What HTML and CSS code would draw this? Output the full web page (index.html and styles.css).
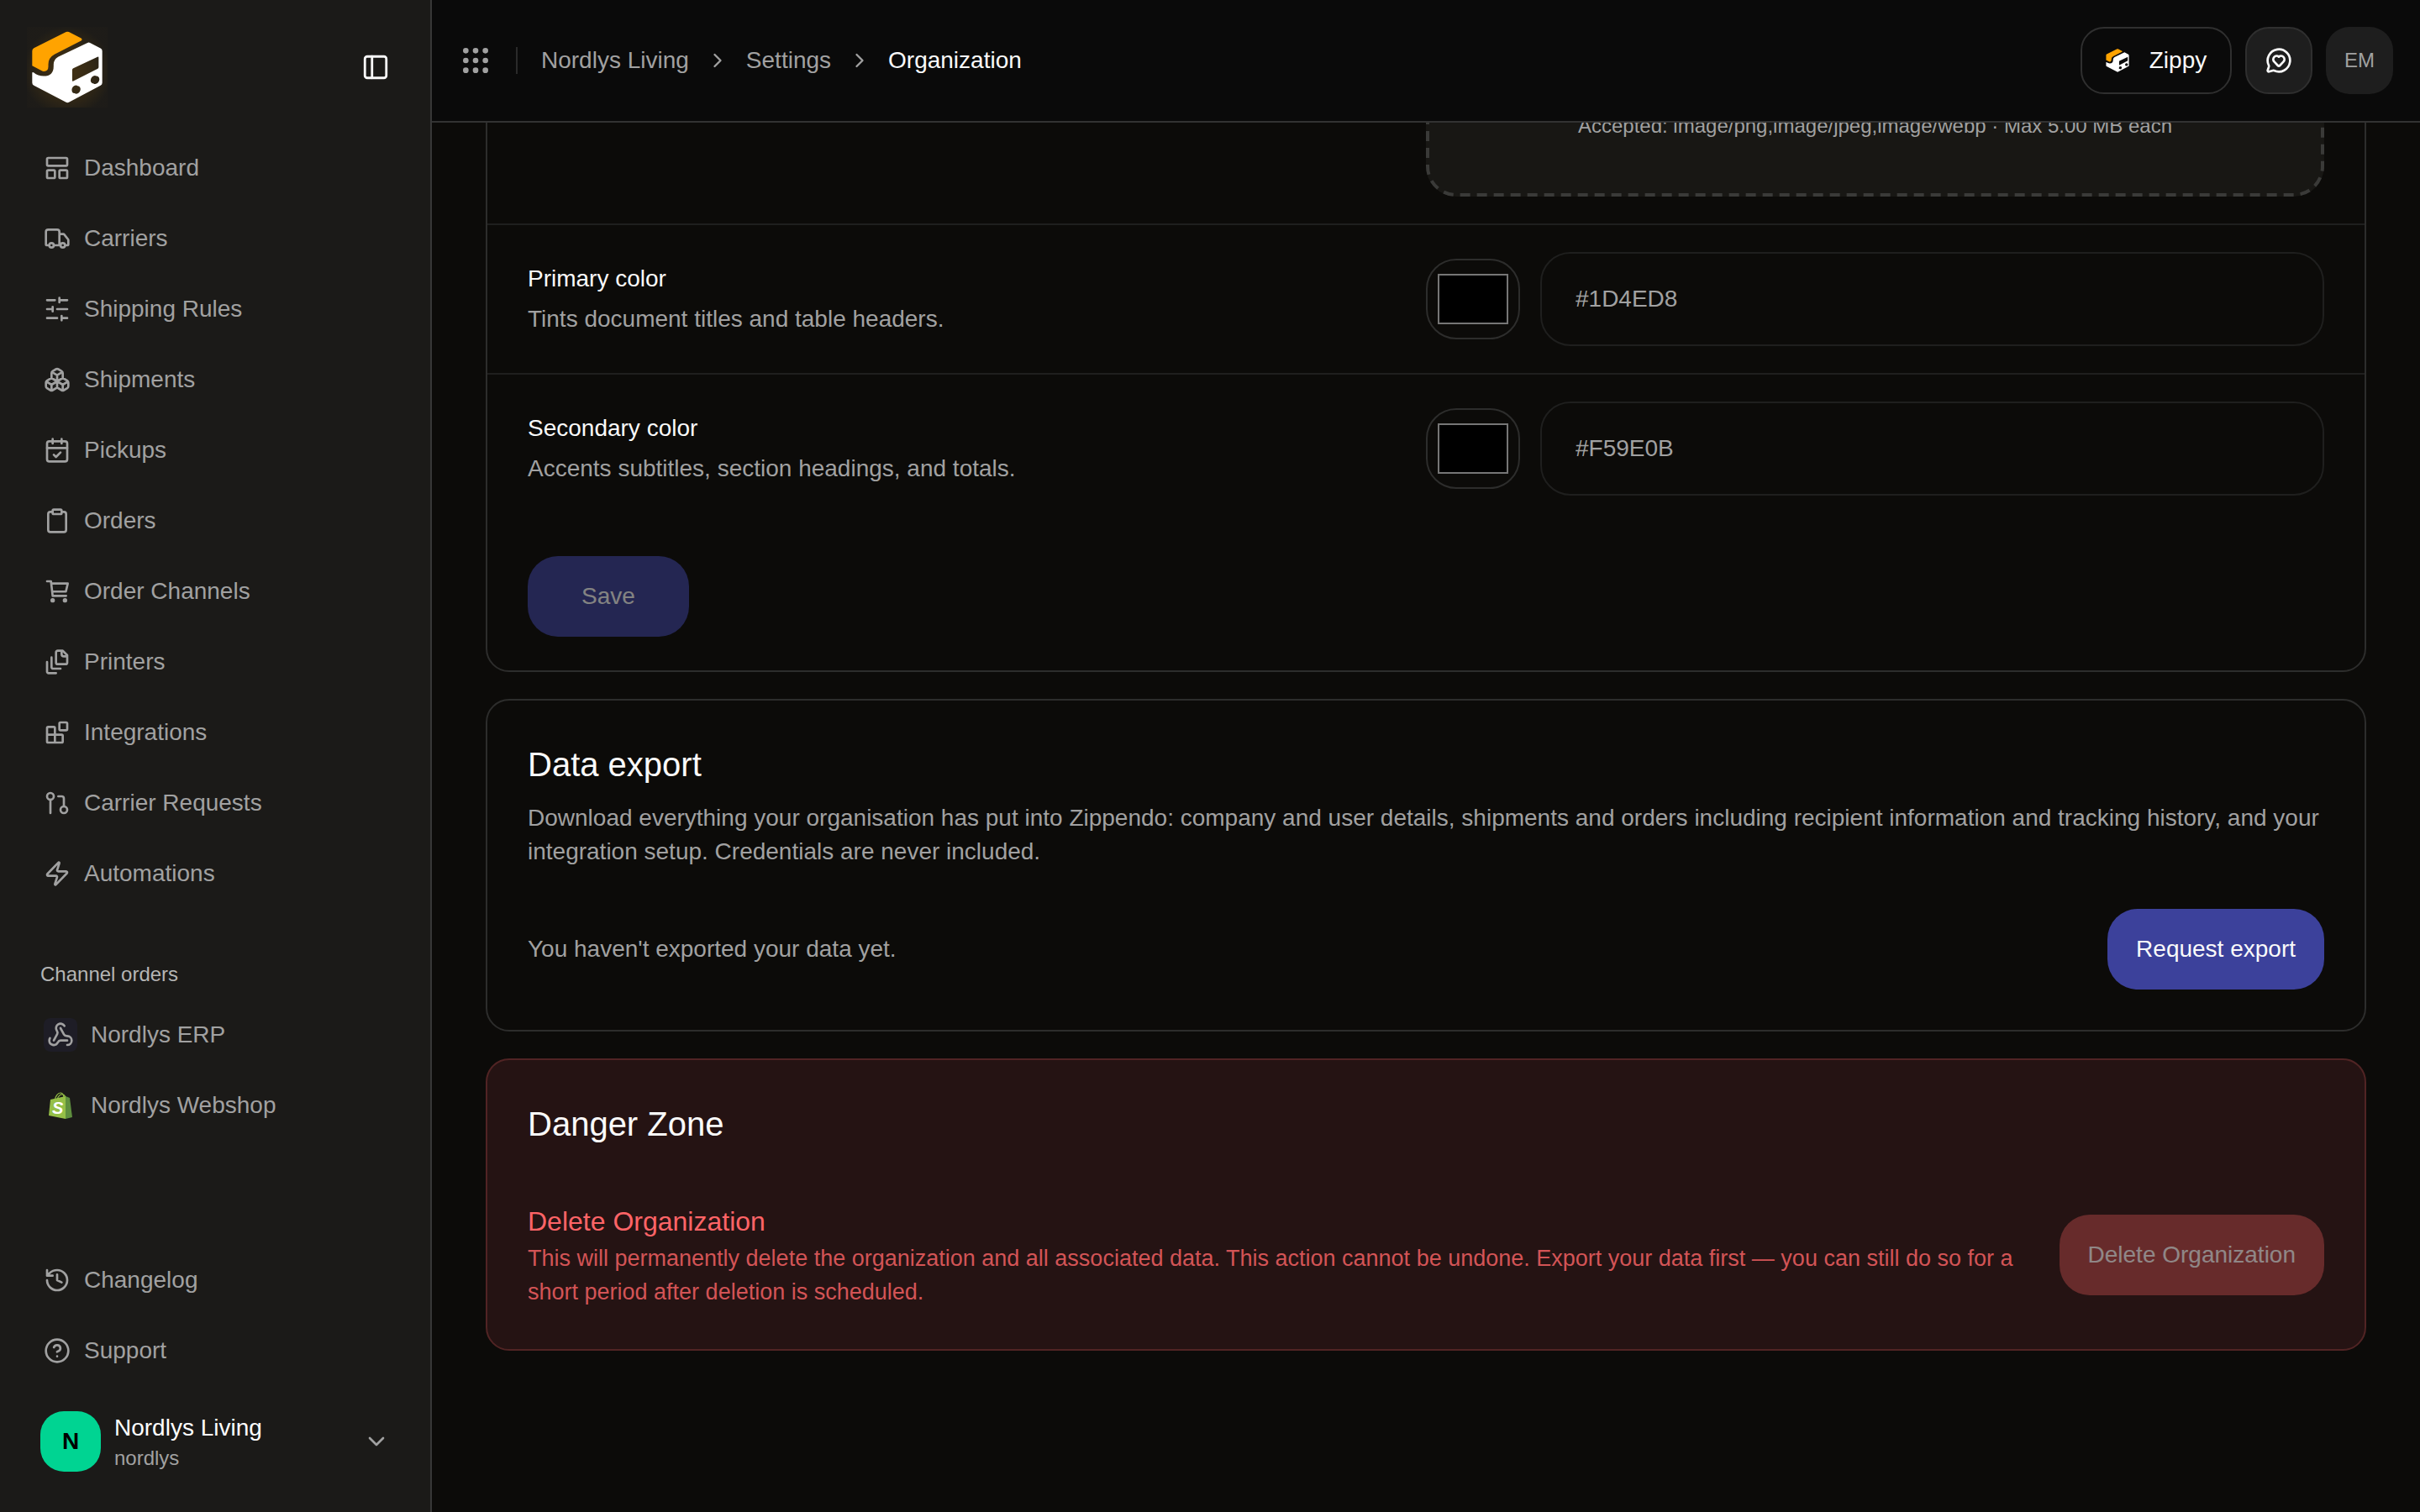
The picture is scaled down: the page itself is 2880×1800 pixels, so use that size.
FILE: index.html
```html
<!DOCTYPE html>
<html lang="en">
<head>
    <meta charset="UTF-8">
    <meta name="viewport" content="width=device-width, initial-scale=1.0">
    <title>Organization</title>
    <link rel="stylesheet" href="styles.css">
</head>
<body>
    <svg class="sprite" aria-hidden="true">
        <symbol id="logo" viewBox="16 14 256 260">
            <path fill="#ffa300" d="M140 17q5-2 10 0l44 23q6 4 0 9L98 98q-22 12-22 36v8q0 17-16 17-4 0-9-3l-33-17V86q0-8 6-11z"/>
            <path fill="#fff" fill-rule="evenodd" d="M217 56q4-3 9 0l38 20q6 3 6 10v114q0 7-6 10l-114 60q-5 3-10 0L24 210q-6-3-6-10v-35q0-5 5-2 16 13 36 13 36 0 36-36v-6q0-18 16-27zM166 148q-4 2-4 6v37q0 5 4 3l88-45q3-2 3-5v-35q0-4-4-2zM181 211a12 15 30 1 0-10 27a12 15 30 1 0 10-27zM249 176a12 15 30 1 0-10 27a12 15 30 1 0 10-27z"/>
        </symbol>
    </svg>

    <div class="app">
        <aside class="sidebar">
            <div class="sidebar-header">
                <a class="brand" href="#" aria-label="Home"><svg><use href="#logo"/></svg></a>
                <button class="toggle" type="button" aria-label="Toggle sidebar">
                    <svg class="icon" viewBox="0 0 24 24"><rect x="3" y="3" width="18" height="18" rx="2"/><path d="M9 3v18"/></svg>
                </button>
            </div>

            <nav class="nav">
                <a class="nav-item" href="#">
                    <svg class="icon" viewBox="0 0 24 24"><rect x="3" y="3" width="18" height="7" rx="1"/><rect x="3" y="14" width="7" height="7" rx="1"/><rect x="14" y="14" width="7" height="7" rx="1"/></svg>
                    Dashboard
                </a>
                <a class="nav-item" href="#">
                    <svg class="icon" viewBox="0 0 24 24"><path d="M14 18V6a2 2 0 0 0-2-2H4a2 2 0 0 0-2 2v11a1 1 0 0 0 1 1h2M15 18H9M19 18h2a1 1 0 0 0 1-1v-3.65a1 1 0 0 0-.22-.624l-3.48-4.35A1 1 0 0 0 17.52 8H14"/><circle cx="17" cy="18" r="2"/><circle cx="7" cy="18" r="2"/></svg>
                    Carriers
                </a>
                <a class="nav-item" href="#">
                    <svg class="icon" viewBox="0 0 24 24"><path d="M21 4h-7M10 4H3M21 12h-9M8 12H3M21 20h-5M12 20H3M14 2v4M8 10v4M16 18v4"/></svg>
                    Shipping Rules
                </a>
                <a class="nav-item" href="#">
                    <svg class="icon" viewBox="0 0 24 24"><path d="M2.97 12.92A2 2 0 0 0 2 14.63v3.24a2 2 0 0 0 .97 1.71l3 1.8a2 2 0 0 0 2.06 0L12 19v-5.5l-5-3-4.03 2.42ZM7 16.5l-4.74-2.85M7 16.5l5-3M7 16.5v5.17M12 13.5V19l3.97 2.38a2 2 0 0 0 2.06 0l3-1.8a2 2 0 0 0 .97-1.71v-3.24a2 2 0 0 0-.97-1.71L17 10.5l-5 3ZM17 16.5l-5-3M17 16.5l4.74-2.85M17 16.5v5.17M7.97 4.42A2 2 0 0 0 7 6.13v4.37l5 3 5-3V6.13a2 2 0 0 0-.97-1.71l-3-1.8a2 2 0 0 0-2.06 0l-3 1.8ZM12 8 7.26 5.15M12 8l4.74-2.85M12 13.5V8"/></svg>
                    Shipments
                </a>
                <a class="nav-item" href="#">
                    <svg class="icon" viewBox="0 0 24 24"><path d="M8 2v4M16 2v4M3 10h18M9 16l2 2 4-4"/><rect x="3" y="4" width="18" height="18" rx="2"/></svg>
                    Pickups
                </a>
                <a class="nav-item" href="#">
                    <svg class="icon" viewBox="0 0 24 24"><rect x="8" y="2" width="8" height="4" rx="1"/><path d="M16 4h2a2 2 0 0 1 2 2v14a2 2 0 0 1-2 2H6a2 2 0 0 1-2-2V6a2 2 0 0 1 2-2h2"/></svg>
                    Orders
                </a>
                <a class="nav-item" href="#">
                    <svg class="icon" viewBox="0 0 24 24"><path d="M3 3h3.5L8 16h12M7 5h14.5l-1.7 7.2H7.6"/><circle cx="8" cy="20" r="1"/><circle cx="19" cy="20" r="1"/></svg>
                    Order Channels
                </a>
                <a class="nav-item" href="#">
                    <svg class="icon" viewBox="0 0 24 24"><path d="M21 7h-3a2 2 0 0 1-2-2V2M21 6v6.5c0 .8-.7 1.5-1.5 1.5h-7c-.8 0-1.5-.7-1.5-1.5v-9c0-.8.7-1.5 1.5-1.5H17ZM7 8v8.8c0 .3.2.6.4.8.2.2.5.4.8.4H15M3 12v8.8c0 .3.2.6.4.8.2.2.5.4.8.4H11"/></svg>
                    Printers
                </a>
                <a class="nav-item" href="#">
                    <svg class="icon" viewBox="0 0 24 24"><rect x="14" y="3" width="7" height="7" rx="1"/><path d="M10 21V8a1 1 0 0 0-1-1H4a1 1 0 0 0-1 1v12a1 1 0 0 0 1 1h12a1 1 0 0 0 1-1v-5a1 1 0 0 0-1-1H3"/></svg>
                    Integrations
                </a>
                <a class="nav-item" href="#">
                    <svg class="icon" viewBox="0 0 24 24"><circle cx="18" cy="18" r="3"/><circle cx="6" cy="6" r="3"/><path d="M13 6h3a2 2 0 0 1 2 2v7M6 9v12"/></svg>
                    Carrier Requests
                </a>
                <a class="nav-item" href="#">
                    <svg class="icon" viewBox="0 0 24 24"><path d="M4 14a1 1 0 0 1-.78-1.63l9.9-10.2a.5.5 0 0 1 .86.46l-1.92 6.02A1 1 0 0 0 13 10h7a1 1 0 0 1 .78 1.63l-9.9 10.2a.5.5 0 0 1-.86-.46l1.92-6.02A1 1 0 0 0 11 14z"/></svg>
                    Automations
                </a>
            </nav>

            <h2 class="nav-label">Channel orders</h2>
            <nav class="nav">
                <a class="nav-item" href="#">
                    <span class="channel channel-erp">
                        <svg class="icon" viewBox="0 0 24 24"><path d="M18 16.98h-5.99c-1.1 0-1.95.94-2.48 1.9A4 4 0 0 1 2 17c.01-.7.2-1.4.57-2M6 17l3.13-5.78c.53-.97.1-2.18-.5-3.1a4 4 0 1 1 6.89-4.06M12 6l3.13 5.73C15.66 12.7 16.9 13 18 13a4 4 0 0 1 0 8"/></svg>
                    </span>
                    Nordlys ERP
                </a>
                <a class="nav-item" href="#">
                    <span class="channel">
                        <!-- shopping bag -->
                        <svg class="bag" viewBox="0 0 28 32">
                            <path d="M7 10c1-5 4-9 7-9s4 4 4 7M10 9c1-4 4-7 7-6s3 3 3 5" fill="none" stroke="#95bf47" stroke-width="1.2"/>
                            <path d="M2 9l18-4v27L0 28z" fill="#95bf47"/>
                            <path d="M20 5l5 2 3 23-8 2z" fill="#5e8e3e"/>
                            <text class="bag-letter" x="4" y="26">S</text>
                        </svg>
                    </span>
                    Nordlys Webshop
                </a>
            </nav>

            <nav class="nav nav-bottom">
                <a class="nav-item" href="#">
                    <svg class="icon" viewBox="0 0 24 24"><path d="M3 12a9 9 0 1 0 9-9 9.75 9.75 0 0 0-6.74 2.74L3 8M3 3v5h5M12 7v5l4 2"/></svg>
                    Changelog
                </a>
                <a class="nav-item" href="#">
                    <svg class="icon" viewBox="0 0 24 24"><circle cx="12" cy="12" r="10"/><path d="M9.09 9a3 3 0 0 1 5.83 1c0 2-3 3-3 3M12 17h.01"/></svg>
                    Support
                </a>
            </nav>

            <button class="org" type="button">
                <span class="org-avatar">N</span>
                <span class="org-text">
                    <span class="org-name">Nordlys Living</span>
                    <span class="org-slug">nordlys</span>
                </span>
                <svg class="icon" viewBox="0 0 24 24"><path d="M6 9l6 6 6-6"/></svg>
            </button>
        </aside>

        <div class="page">
            <header class="topbar">
                <button class="apps" type="button" aria-label="Apps">
                    <svg class="icon" viewBox="0 0 24 24"><circle cx="5" cy="5" r="1"/><circle cx="12" cy="5" r="1"/><circle cx="19" cy="5" r="1"/><circle cx="5" cy="12" r="1"/><circle cx="12" cy="12" r="1"/><circle cx="19" cy="12" r="1"/><circle cx="5" cy="19" r="1"/><circle cx="12" cy="19" r="1"/><circle cx="19" cy="19" r="1"/></svg>
                </button>
                <nav class="breadcrumb">
                    <a href="#">Nordlys Living</a>
                    <svg class="icon" viewBox="0 0 24 24"><path d="M9 18l6-6-6-6"/></svg>
                    <a href="#">Settings</a>
                    <svg class="icon" viewBox="0 0 24 24"><path d="M9 18l6-6-6-6"/></svg>
                    <span class="current">Organization</span>
                </nav>
                <div class="actions">
                    <button class="action zippy" type="button"><svg><use href="#logo"/></svg>Zippy</button>
                    <button class="action feedback" type="button" aria-label="Feedback">
                        <svg class="icon" viewBox="0 0 24 24"><path d="M2.992 16.342a2 2 0 0 1 .094 1.167l-1.065 3.29a1 1 0 0 0 1.236 1.168l3.413-.998a2 2 0 0 1 1.099.092 10 10 0 1 0-4.777-4.719"/><path d="M7.828 13.07A3 3 0 0 1 12 8.764a3 3 0 0 1 4.172 4.306l-3.447 3.62a1 1 0 0 1-1.449 0z"/></svg>
                    </button>
                    <button class="action user" type="button">EM</button>
                </div>
            </header>

            <main class="content">
                <form class="card branding">
                    <div class="row">
                        <div class="dropzone">
                            <svg class="dropzone-border" aria-hidden="true"><rect x="2" y="2" rx="34"/></svg>
                            <p>Accepted: image/png,image/jpeg,image/webp · Max 5.00 MB each</p>
                        </div>
                    </div>
                    <div class="row">
                        <div class="row-text">
                            <label for="primary">Primary color</label>
                            <p>Tints document titles and table headers.</p>
                        </div>
                        <div class="color-field">
                            <input class="swatch" type="color" value="#000000" aria-label="Pick primary color">
                            <input class="text-input" id="primary" type="text" placeholder="#1D4ED8">
                        </div>
                    </div>
                    <div class="row">
                        <div class="row-text">
                            <label for="secondary">Secondary color</label>
                            <p>Accents subtitles, section headings, and totals.</p>
                        </div>
                        <div class="color-field">
                            <input class="swatch" type="color" value="#000000" aria-label="Pick secondary color">
                            <input class="text-input" id="secondary" type="text" placeholder="#F59E0B">
                        </div>
                    </div>
                    <div class="card-footer">
                        <button class="btn btn-wide" type="submit" disabled>Save</button>
                    </div>
                </form>

                <section class="card padded">
                    <h2>Data export</h2>
                    <p>Download everything your organisation has put into Zippendo: company and user details, shipments and orders including recipient information and tracking history, and your integration setup. Credentials are never included.</p>
                    <div class="card-action">
                        <p>You haven't exported your data yet.</p>
                        <button class="btn" type="button">Request export</button>
                    </div>
                </section>

                <section class="card padded danger">
                    <h2>Danger Zone</h2>
                    <div class="card-action">
                        <div>
                            <h3>Delete Organization</h3>
                            <p>This will permanently delete the organization and all associated data. This action cannot be undone. Export your data first — you can still do so for a short period after deletion is scheduled.</p>
                        </div>
                        <button class="btn btn-danger" type="button" disabled>Delete Organization</button>
                    </div>
                </section>
            </main>
        </div>
    </div>
</body>
</html>
```

FILE: styles.css
```css
* {
    box-sizing: border-box;
    margin: 0;
    padding: 0;
}

body {
    background-color: #0c0b09;
    color: #fafafa;
    font-family: "Liberation Sans", Arial, sans-serif;
    font-size: 28px;
    line-height: 40px;
}

a {
    color: inherit;
    text-decoration: none;
}

button,
input {
    font: inherit;
    color: inherit;
    background: none;
    border: none;
}

h2,
h3 {
    font-weight: 400;
}

.sprite {
    display: none;
}

.icon {
    flex: none;
    width: 32px;
    height: 32px;
    fill: none;
    stroke: currentColor;
    stroke-width: 2;
    stroke-linecap: round;
    stroke-linejoin: round;
}

.app {
    display: flex;
    height: 100vh;
}

/* Sidebar */
.sidebar {
    flex: none;
    display: flex;
    flex-direction: column;
    width: 514px;
    padding: 32px 0 48px;
    background-color: #1b1a18;
    border-right: 2px solid #373737;
    color: #a1a1a1;
}

.sidebar-header {
    display: flex;
    align-items: center;
    justify-content: space-between;
    padding: 0 48px 0 32px;
    margin-bottom: 30px;
}

.brand {
    display: flex;
    width: 96px;
    height: 96px;
    padding: 5px;
    background: radial-gradient(circle at 50% 55%, rgba(255, 163, 0, 0.18), rgba(255, 163, 0, 0.1) 45%, rgba(255, 163, 0, 0.01) 75%);
}

.brand svg {
    width: 100%;
    height: 100%;
}

.toggle {
    display: flex;
    color: #fafafa;
}

.toggle .icon {
    width: 34px;
    height: 34px;
}

.nav {
    display: flex;
    flex-direction: column;
    padding: 0 32px;
}

.nav-item {
    display: flex;
    align-items: center;
    gap: 16px;
    height: 84px;
    padding: 0 20px;
}

.nav-label {
    margin: 54px 0 6px;
    padding: 0 48px;
    font-size: 24px;
    line-height: 48px;
    color: #b5b5b4;
}

.nav-bottom {
    margin-top: auto;
}

.channel {
    display: flex;
    align-items: center;
    justify-content: center;
    width: 40px;
    height: 40px;
    border-radius: 8px;
}

.channel-erp {
    background-color: #1e1d26;
}

.bag {
    width: 28px;
    height: 32px;
}

.bag-letter {
    fill: #fff;
    font-size: 20px;
    font-weight: 700;
    font-style: italic;
}

.org {
    display: flex;
    align-items: center;
    gap: 16px;
    margin-top: 30px;
    padding: 0 48px;
    text-align: left;
}

.org-avatar {
    display: flex;
    align-items: center;
    justify-content: center;
    width: 72px;
    height: 72px;
    border-radius: 28px;
    background-color: #00d492;
    color: #000;
    font-weight: 700;
}

.org-text {
    flex: 1;
    display: flex;
    flex-direction: column;
}

.org-name {
    color: #fff;
}

.org-slug {
    font-size: 24px;
    line-height: 32px;
}

/* Top bar */
.page {
    flex: 1;
    min-width: 0;
    display: flex;
    flex-direction: column;
}

.topbar {
    flex: none;
    display: flex;
    align-items: center;
    height: 146px;
    padding: 0 32px;
    background-color: #0a0a0a;
    border-bottom: 2px solid #323232;
}

.apps {
    display: flex;
    color: #a1a1a1;
}

.apps .icon {
    width: 40px;
    height: 40px;
}

.breadcrumb {
    display: flex;
    align-items: center;
    gap: 20px;
    height: 32px;
    margin-left: 28px;
    padding-left: 28px;
    border-left: 2px solid #2a2a2a;
    color: #a1a1a1;
}

.breadcrumb .icon {
    width: 28px;
    height: 28px;
}

.current {
    color: #fafafa;
}

.actions {
    display: flex;
    gap: 16px;
    margin-left: auto;
}

.action {
    display: flex;
    align-items: center;
    justify-content: center;
    width: 80px;
    height: 80px;
    border: 2px solid #2f2f2f;
    border-radius: 28px;
}

.zippy {
    gap: 24px;
    width: 180px;
}

.zippy svg {
    width: 28px;
    height: 28px;
}

.feedback {
    background-color: #1e1e1e;
}

.user {
    border: none;
    background-color: #1e1e1e;
    color: #a1a1a1;
    font-size: 24px;
}

/* Settings cards, scrolled to the end */
.content {
    flex: 1;
    min-height: 0;
    display: flex;
    flex-direction: column;
    justify-content: flex-end;
    gap: 32px;
    padding: 0 64px 192px;
    overflow: hidden;
}

.card {
    flex: none;
    border: 2px solid #2d2d2c;
    border-radius: 28px;
}

.card p {
    color: #a1a1a1;
}

.padded {
    display: flex;
    flex-direction: column;
    padding: 48px;
}

.card h2 {
    margin-bottom: 16px;
    font-size: 40px;
    line-height: 56px;
}

.row {
    display: grid;
    grid-template-columns: 1fr 1fr;
    align-items: center;
    padding: 32px 48px;
}

.row + .row {
    border-top: 2px solid #1f1f1e;
}

.row-text {
    display: flex;
    flex-direction: column;
    gap: 8px;
}

.dropzone {
    position: relative;
    grid-column: 2;
    padding: 68px;
    border-radius: 36px;
    background-color: #181714;
    text-align: center;
}

.dropzone p {
    font-size: 24px;
    line-height: 32px;
}

.dropzone-border {
    position: absolute;
    inset: 0;
    width: 100%;
    height: 100%;
}

.dropzone-border rect {
    width: calc(100% - 4px);
    height: calc(100% - 4px);
    fill: none;
    stroke: #3a3a38;
    stroke-width: 4;
    stroke-dasharray: 12 8;
}

.color-field {
    display: flex;
    align-items: center;
    gap: 24px;
}

.swatch {
    flex: none;
    width: 112px;
    height: 96px;
    padding: 8px;
    border: 2px solid #2d2d2c;
    border-radius: 36px;
}

.swatch::-webkit-color-swatch-wrapper {
    padding: 8px 4px;
}

.swatch::-webkit-color-swatch {
    border: 2px solid #767676;
}

.text-input {
    flex: 1;
    height: 112px;
    padding: 0 40px;
    border: 2px solid #1f1f1e;
    border-radius: 36px;
}

.text-input::placeholder {
    color: #a1a1a1;
}

.card-footer {
    padding: 40px 48px;
}

.card-action {
    display: flex;
    align-items: center;
    justify-content: space-between;
    gap: 24px;
    margin-top: 48px;
}

.btn {
    flex: none;
    height: 96px;
    padding: 0 34px;
    border-radius: 36px;
    background-color: #3c419b;
}

.btn:disabled {
    opacity: 0.5;
}

.btn-wide {
    padding: 0 64px;
}

.btn-danger {
    background-color: #a94343;
}

.danger {
    background-color: #251313;
    border-color: #512424;
}

.danger h3 {
    font-size: 32px;
    line-height: 48px;
    color: #ff6467;
}

.danger p {
    font-size: 27px;
    color: #d35456;
}
```
